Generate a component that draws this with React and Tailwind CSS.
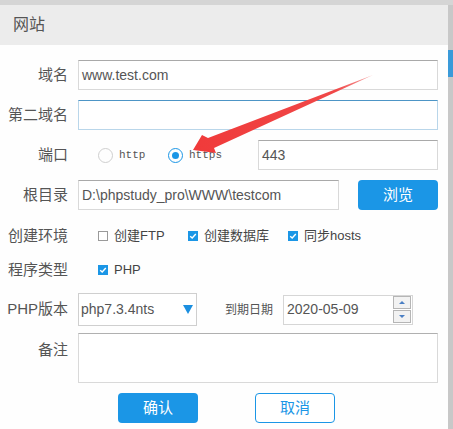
import React from 'react';

const font = { fontFamily: '"Liberation Sans", "Noto Sans CJK SC", sans-serif' };

const Label = ({ children, className = '' }) => (
  <div className={`w-[68px] shrink-0 text-right text-[15px] text-[#555] ${className}`}>{children}</div>
);

const Field = ({ value, className = '' }) => (
  <div className={`h-[30px] flex items-center px-[3px] border border-[#d9d9d9] border-t-[#a9a9a9] bg-white text-[14px] text-[#555] ${className}`}>
    {value}
  </div>
);

const Check = ({ on }) =>
  on ? (
    <span className="w-[10px] h-[10px] bg-[#1b96e6] flex items-center justify-center">
      <svg width="8" height="8" viewBox="0 0 8 8">
        <path d="M1.2 4.2 L3.2 6 L6.8 2" stroke="#fff" strokeWidth="1.4" fill="none" />
      </svg>
    </span>
  ) : (
    <span className="w-[10px] h-[10px] border border-[#9a9a9a] bg-white" />
  );

const Option = ({ on, label, className = '' }) => (
  <div className={`flex items-center gap-[6px] text-[13px] text-[#444] ${className}`}>
    <Check on={on} />
    <span>{label}</span>
  </div>
);

const Radio = ({ on, label }) => (
  <div className="w-[70px] flex items-center gap-[6px]">
    {on ? (
      <span className="w-[15px] h-[15px] rounded-full border-[1.5px] border-[#1b96e6] flex items-center justify-center">
        <span className="w-[7px] h-[7px] rounded-full bg-[#1b96e6]" />
      </span>
    ) : (
      <span className="w-[15px] h-[15px] rounded-full border border-[#cfcfcf]" />
    )}
    <span className="text-[11px] text-[#555]" style={{ fontFamily: '"Liberation Mono", monospace' }}>
      {label}
    </span>
  </div>
);

// red pointer arrow drawn over the form
const Arrow = () => (
  <svg className="absolute left-0 top-0 pointer-events-none" width="448" height="429">
    <defs>
      <linearGradient id="arrowFill" x1="373" y1="71" x2="193" y2="145" gradientUnits="userSpaceOnUse">
        <stop offset="0" stopColor="#f7a8a8" />
        <stop offset="0.2" stopColor="#f04848" />
        <stop offset="1" stopColor="#f03a3a" />
      </linearGradient>
    </defs>
    <polygon
      points="193,145 202,130 208,133 373,70 214,143 216,148"
      fill="url(#arrowFill)"
    />
  </svg>
);

export default function App() {
  return (
    <div className="w-[453px] h-[429px] bg-[#c8c8c8] overflow-hidden" style={font}>
      <div className="h-[5px] bg-[#d5d5d5]" />
      <div className="flex h-[424px]">
        <div className="relative w-[448px] bg-[#fefefe]">
          <div className="h-[40px] bg-[#ececec] flex items-center pl-[13px] text-[16px] text-[#555]">网站</div>

          <div className="pt-[15px] pr-[10px]">
            <div className="flex items-center gap-[10px]">
              <Label>域名</Label>
              <Field value="www.test.com" className="flex-1" />
            </div>

            <div className="flex items-center gap-[10px] mt-[10px]">
              <Label>第二域名</Label>
              <div className="flex-1 h-[30px] border border-[#b9d6ea] border-t-[#4d95c6] bg-white" />
            </div>

            <div className="flex items-center gap-[10px] mt-[10px]">
              <Label>端口</Label>
              <div className="flex items-center pl-[20px] w-[170px]">
                <Radio label="http" />
                <Radio on label="https" />
              </div>
              <Field value="443" className="flex-1" />
            </div>

            <div className="flex items-center gap-[10px] mt-[10px]">
              <Label>根目录</Label>
              <Field value="D:\phpstudy_pro\WWW\testcom" className="w-[261px]" />
              <button className="ml-[9px] flex-1 h-[30px] rounded-[4px] bg-[#1b96e6] text-white text-[15px]">浏览</button>
            </div>

            <div className="flex items-center gap-[10px] mt-[12px] h-[28px]">
              <Label>创建环境</Label>
              <div className="flex items-center pl-[20px]">
                <Option label="创建FTP" className="w-[90px]" />
                <Option on label="创建数据库" className="w-[100px]" />
                <Option on label="同步hosts" />
              </div>
            </div>

            <div className="flex items-center gap-[10px] mt-[6px] h-[28px]">
              <Label>程序类型</Label>
              <div className="pl-[20px]">
                <Option on label="PHP" />
              </div>
            </div>

            <div className="flex items-center gap-[10px] mt-[9px]">
              <Label>PHP版本</Label>
              <div className="w-[119px] h-[33px] border border-[#cfcfcf] bg-white flex items-center justify-between pl-[2px] pr-[3px] text-[14px] text-[#555]">
                <span>php7.3.4nts</span>
                <svg width="10" height="9" viewBox="0 0 10 9">
                  <path d="M0 0 H10 L5 9 Z" fill="#1b8fe0" />
                </svg>
              </div>
              <span className="ml-[18px] w-[48px] text-[12px] text-[#555]">到期日期</span>
              <div className="w-[130px] h-[30px] border border-[#d6d6d6] bg-white flex items-center justify-between pl-[3px] pr-[1px] text-[14px] text-[#555]">
                <span>2020-05-09</span>
                <div className="flex flex-col gap-[1px]">
                  <span className="w-[18px] h-[13px] border border-[#b5b5b5] bg-[#f2f2f2] flex items-center justify-center">
                    <svg width="6" height="3" viewBox="0 0 6 3"><path d="M0 3 L3 0 L6 3 Z" fill="#4a7fc4" /></svg>
                  </span>
                  <span className="w-[18px] h-[13px] border border-[#b5b5b5] bg-[#f2f2f2] flex items-center justify-center">
                    <svg width="6" height="3" viewBox="0 0 6 3"><path d="M0 0 L3 3 L6 0 Z" fill="#4a7fc4" /></svg>
                  </span>
                </div>
              </div>
            </div>

            <div className="flex items-start gap-[10px] mt-[7px]">
              <Label className="pt-[6px]">备注</Label>
              <div className="flex-1 h-[50px] border border-[#d9d9d9] border-t-[#b0b0b0] bg-white" />
            </div>

            <div className="flex gap-[57px] pl-[118px] mt-[10px]">
              <button className="w-[80px] h-[30px] rounded-[4px] bg-[#1b96e6] text-white text-[15px]">确认</button>
              <button className="w-[80px] h-[30px] rounded-[4px] border border-[#1b96e6] bg-white text-[#1b96e6] text-[15px]">取消</button>
            </div>
          </div>

          <Arrow />
        </div>
        <div className="flex-1 flex flex-col">
          <div className="h-[45px]" />
          <div className="h-[27px] bg-[#3a9ad9]" />
        </div>
      </div>
    </div>
  );
}
